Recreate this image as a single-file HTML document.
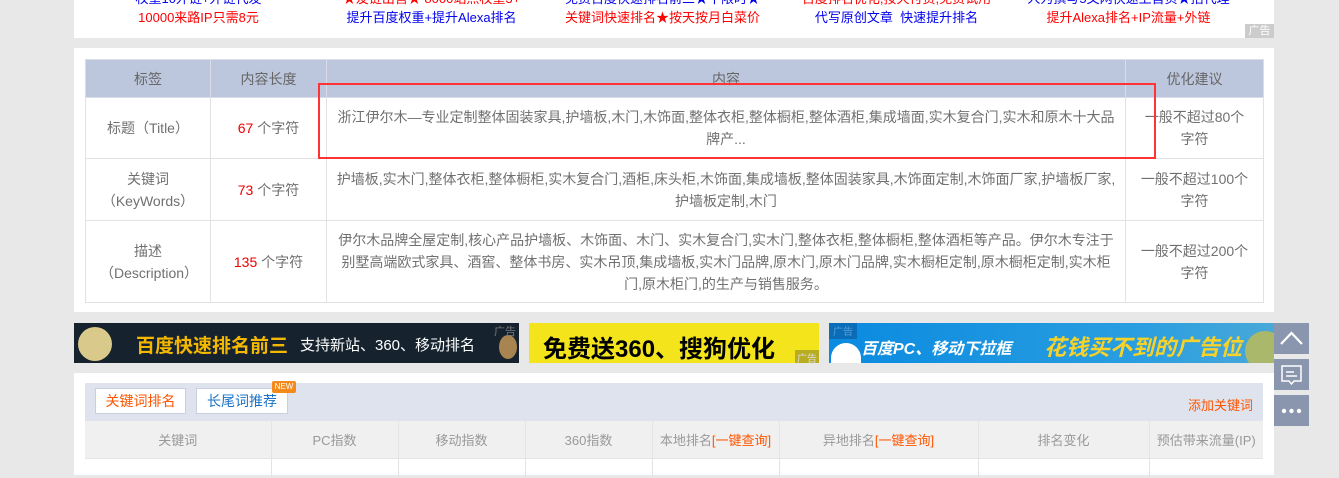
<!DOCTYPE html>
<html><head><meta charset="utf-8">
<style>
*{margin:0;padding:0;box-sizing:border-box}
body{width:1339px;height:475px;overflow:hidden;background:#e8e8e8;font-family:"Liberation Sans","Noto Sans CJK SC",sans-serif;font-size:13px;color:#666;position:relative}
.abs{position:absolute}
.panel{position:absolute;left:74px;width:1200px;background:#fff}
.topc{position:absolute;width:233px;text-align:center;font-size:13px;white-space:nowrap;line-height:18px}
.b{color:#0000ee}.r{color:#f00}
table{border-collapse:collapse}
.t1{position:absolute;left:85px;top:59px;width:1178px;table-layout:fixed}
.t1 td,.t1 th{border:1px solid #e2e2e2;text-align:center;font-weight:normal;line-height:22px;padding:0 14px;font-size:14px;color:#707070}
.t1 td.c{padding:0 8px}
.t1 th{background:#bcc6dc;height:38px;color:#666;font-size:14px;border-color:#d8dde8}
.num{color:#e00}
.sb{position:absolute;left:1274px;width:35px;height:31px;background:#8a95ae}
.t2{position:absolute;left:85px;top:421px;width:1178px}
.t2 th{background:#f0f0f0;height:37px;font-weight:normal;color:#999;border-right:1px solid #e4e4e4;border-bottom:1px solid #e4e4e4;font-size:13px}
.t2 td{height:20px;border-right:1px solid #e4e4e4}
.o{color:#f50}
</style></head><body>
<div class="panel" style="top:0;height:38px">
</div>
<div class="topc b" style="left:82px;top:-10px">权重10外链+外链代发</div>
<div class="topc r" style="left:82px;top:9px">10000来路IP只需8元</div>
<div class="topc r" style="left:315px;top:-10px">★友链出售★ 8000站点权重3+</div>
<div class="topc b" style="left:315px;top:9px">提升百度权重+提升Alexa排名</div>
<div class="topc b" style="left:546px;top:-10px">免费百度快速排名前三★干限时★</div>
<div class="topc r" style="left:546px;top:9px">关键词快速排名★按天按月白菜价</div>
<div class="topc r" style="left:780px;top:-10px">百度排名优化,按天付费,免费试用</div>
<div class="topc b" style="left:780px;top:9px">代写原创文章&nbsp; 快速提升排名</div>
<div class="topc b" style="left:1012px;top:-10px">人为撰写5文网快速上首页★招代理</div>
<div class="topc r" style="left:1012px;top:9px">提升Alexa排名+IP流量+外链</div>
<div class="abs" style="left:1245px;top:24px;width:29px;height:14px;background:#ccc;color:#fff;font-size:11px;line-height:14px;text-align:center">广告</div>

<div class="panel" style="top:48px;height:264px"></div>
<table class="t1">
<colgroup><col style="width:125px"><col style="width:116px"><col style="width:799px"><col style="width:138px"></colgroup>
<tr><th>标签</th><th>内容长度</th><th>内容</th><th>优化建议</th></tr>
<tr style="height:61px"><td>标题（Title）</td><td><span class="num">67</span> 个字符</td><td class="c">浙江伊尔木—专业定制整体固装家具,护墙板,木门,木饰面,整体衣柜,整体橱柜,整体酒柜,集成墙面,实木复合门,实木和原木十大品牌产...</td><td>一般不超过80个字符</td></tr>
<tr style="height:62px"><td>关键词<br>（KeyWords）</td><td><span class="num">73</span> 个字符</td><td class="c">护墙板,实木门,整体衣柜,整体橱柜,实木复合门,酒柜,床头柜,木饰面,集成墙板,整体固装家具,木饰面定制,木饰面厂家,护墙板厂家,护墙板定制,木门</td><td>一般不超过100个字符</td></tr>
<tr style="height:82px"><td>描述<br>（Description）</td><td><span class="num">135</span> 个字符</td><td class="c">伊尔木品牌全屋定制,核心产品护墙板、木饰面、木门、实木复合门,实木门,整体衣柜,整体橱柜,整体酒柜等产品。伊尔木专注于别墅高端欧式家具、酒窖、整体书房、实木吊顶,集成墙板,实木门品牌,原木门,原木门品牌,实木橱柜定制,原木橱柜定制,实木柜门,原木柜门,的生产与销售服务。</td><td>一般不超过200个字符</td></tr>
</table>
<div class="abs" style="left:318px;top:83px;width:838px;height:76px;border:2px solid #f33"></div>

<div class="abs" style="left:74px;top:323px;width:445px;height:40px;background:#16232f;overflow:hidden">
<div class="abs" style="left:4px;top:4px;width:34px;height:34px;border-radius:50%;background:#d9c98a"></div>
<div class="abs" style="left:62px;top:8px;color:#f5b800;font-size:19px;font-weight:bold;white-space:nowrap">百度快速排名前三</div>
<div class="abs" style="left:226px;top:11px;color:#fff;font-size:15px;white-space:nowrap">支持新站、360、移动排名</div>
<div class="abs" style="left:425px;top:12px;width:18px;height:24px;border-radius:50%;background:#a88450"></div>
<div class="abs" style="left:420px;top:0;color:#777;font-size:11px">广告</div></div>
<div class="abs" style="left:529px;top:323px;width:290px;height:40px;background:#f3e41b;overflow:hidden">
<div class="abs" style="left:14px;top:6px;color:#000;font-size:24px;font-weight:bold;white-space:nowrap">免费送360、搜狗优化</div>
<div class="abs" style="right:0;bottom:0;width:24px;height:13px;background:#b8ac20;color:#ddd;font-size:10px;text-align:center">广告</div></div>
<div class="abs" style="left:829px;top:323px;width:445px;height:40px;background:linear-gradient(90deg,#0a8ae0,#2a9ee0 70%,#4aa8d8);overflow:hidden">
<div class="abs" style="left:0;top:0;width:28px;height:16px;background:#0b6cb8;color:#5aa0d8;font-size:10px;text-align:center">广告</div>
<div class="abs" style="left:2px;top:20px;width:30px;height:20px;border-radius:15px 15px 0 0;background:#fff"></div>
<div class="abs" style="left:32px;top:12px;color:#fff;font-size:16px;font-weight:bold;font-style:italic;white-space:nowrap">百度PC、移动下拉框</div>
<div class="abs" style="left:215px;top:7px;color:#f6d22a;font-size:22px;font-weight:bold;font-style:italic;white-space:nowrap">花钱买不到的广告位</div>
<div class="abs" style="left:416px;top:8px;width:40px;height:40px;border-radius:50%;background:#a9b86a"></div></div>

<div class="sb" style="top:323px"><svg width="35" height="31"><path d="M7 21 L17.5 10 L28 21" stroke="#fff" stroke-width="2.2" fill="none"/></svg></div>
<div class="sb" style="top:359px"><svg width="35" height="31"><path d="M8 7 H27 V22 H20 L17.5 25 L15 22 H8 Z" stroke="#fff" stroke-width="1.5" fill="none"/><path d="M12 13 H20 M12 17 H23" stroke="#fff" stroke-width="1.5"/></svg></div>
<div class="sb" style="top:395px"><svg width="35" height="31"><circle cx="10" cy="16" r="2.2" fill="#fff"/><circle cx="17.5" cy="16" r="2.2" fill="#fff"/><circle cx="25" cy="16" r="2.2" fill="#fff"/></svg></div>

<div class="panel" style="top:373px;height:102px"></div>
<div class="abs" style="left:85px;top:383px;width:1178px;height:38px;background:#dfe3ee"></div>
<div class="abs" style="left:95px;top:388px;width:91px;height:26px;background:#fff;border:1px solid #c8cfe0;color:#f50;text-align:center;line-height:24px;font-size:14px">关键词排名</div>
<div class="abs" style="left:196px;top:388px;width:92px;height:26px;background:#fff;border:1px solid #c8cfe0;color:#1a73c8;text-align:center;line-height:24px;font-size:14px">长尾词推荐</div>
<div class="abs" style="left:272px;top:381px;width:24px;height:12px;background:#f38a1b;color:#fff;font-size:8px;line-height:12px;text-align:center;border-radius:2px">NEW</div>
<div class="abs" style="left:1188px;top:395px;color:#f50;font-size:13px">添加关键词</div>
<table class="t2">
<tr><th style="width:186px">关键词</th><th style="width:127px">PC指数</th><th style="width:127px">移动指数</th><th style="width:127px">360指数</th><th style="width:127px">本地排名<span class="o">[一键查询]</span></th><th style="width:199px">异地排名<span class="o">[一键查询]</span></th><th style="width:171px">排名变化</th><th style="border-right:none">预估带来流量(IP)</th></tr>
<tr><td></td><td></td><td></td><td></td><td></td><td></td><td></td><td style="border-right:none"></td></tr>
</table>
</body></html>
